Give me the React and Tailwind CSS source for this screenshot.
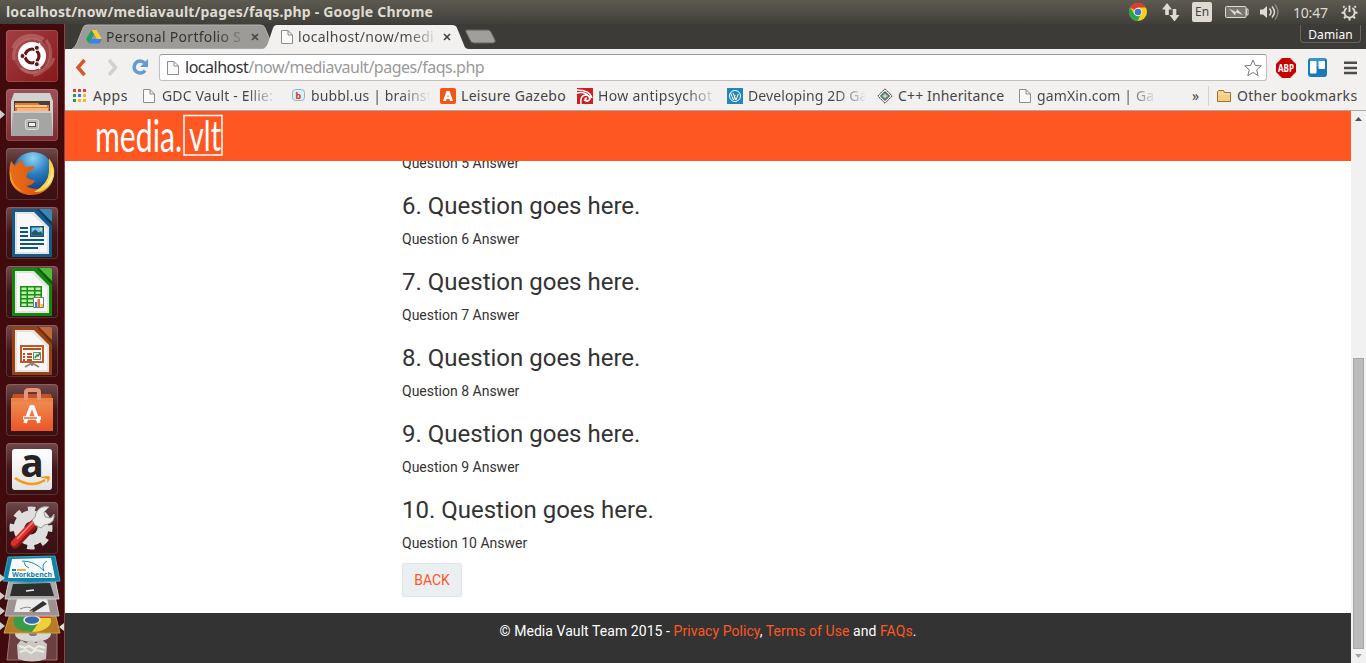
import React from "react";

const ubuntu = "font-['Noto_Sans','Open_Sans',sans-serif]";

function PageIcon() {
  return (
    <svg width="12" height="14" viewBox="0 0 12 14" className="shrink-0">
      <path d="M.5.5h6.5l4.500 4.500v8.500h-11z M7 .5v4.500h4.500" fill="#fafafa" stroke="#8c8c8c" />
    </svg>
  );
}

function ChromeIcon({ size = 18 }) {
  return (
    <svg width={size} height={size} viewBox="0 0 18 18">
      <circle cx="9" cy="9" r="9" fill="#f8cd18" />
      <path d="M9 9 1.200 4.500A9 9 0 0 1 16.800 4.500H9z" fill="#df3b2c" />
      <path d="M1.200 4.500A9 9 0 0 0 8.600 18L12 11 9 9 5.200 11z" fill="#2ba24c" />
      <circle cx="9" cy="9" r="4.300" fill="#f5f5f5" />
      <circle cx="9" cy="9" r="3.300" fill="#3b78c4" />
    </svg>
  );
}

/* ---------- top panel ---------- */
function TopPanel() {
  return (
    <header className={`flex h-6 w-full items-center bg-linear-to-b from-[#5d5b50] to-[#403f3a] pl-1.5 text-[#dfdbd2] ${ubuntu}`}>
      <div className="w-[1123px] text-[14px] leading-6 font-bold tracking-[0.190px] whitespace-nowrap">
        localhost/now/mediavault/pages/faqs.php - Google Chrome
      </div>
      <div className="flex h-6 items-center">
        <div className="w-[33px]"><ChromeIcon /></div>
        <svg width="30" height="18" viewBox="0 0 30 18" fill="#dfdbd2">
          <path d="M5 0 0 6.500h3.200V12h3.600V6.500H10zM12.500 18.500 7.500 12h3.200V6h3.600v6h3.200z" />
        </svg>
        <div className="mr-3 flex h-5 w-5 items-center justify-center rounded-[2px] bg-[#dfdbd2] text-[12px] text-[#45443f]">En</div>
        <svg width="36" height="14" viewBox="0 0 36 14">
          <rect x="1.500" y="1.500" width="20.500" height="11" rx="1" fill="#77756d" stroke="#dfdbd2" />
          <path d="M22.500 4h1.500v6h-1.500z" fill="none" stroke="#dfdbd2" />
          <path d="M5 3.500 12 7l1-3 6 6-7-2.500-1 3z" fill="#dfdbd2" />
        </svg>
        <svg width="33" height="18" viewBox="0 0 33 18">
          <path d="M0 6.500h3l4-3.500v12l-4-3.500H0z" fill="#dfdbd2" />
          <path d="M9.500 5.500q3 3.500 0 7M12 3.500q5 5.500 0 11" fill="none" stroke="#dfdbd2" strokeWidth="1.500" />
          <path d="M15 1.500q6 7.500 0 15" fill="none" stroke="#88867d" strokeWidth="1.500" />
        </svg>
        <div className="w-[48px] text-[14px] tracking-[-0.200px]">10:47</div>
        <svg width="17" height="17" viewBox="0 0 17 17" fill="none" stroke="#dfdbd2">
          <path d="M5.700 4A5.200 5.200 0 1 0 11.300 4M8.500 1.500V8" strokeWidth="1.900" />
          <path d="M3.500 3.500 2.200 2.200M13.500 3.500l1.300-1.300M3 8.800H.5M14 8.800h2.500M4.500 12.800 3 14.300M12.500 12.800l1.500 1.500M8.500 14v2.500" strokeWidth="2" />
        </svg>
      </div>
    </header>
  );
}

/* ---------- launcher ---------- */
const tile = "flex h-[52px] w-[52px] shrink-0 items-center justify-center overflow-hidden rounded-[4px] shadow-[inset_0_0_0_1px_#ffffff25]";
const darkTile = `${tile} bg-linear-to-b from-[#70494b] via-[#431719] to-[#391012]`;

function DocIcon({ color, light, dark, children }) {
  return (
    <svg width="52" height="52" viewBox="0 0 52 52">
      <path d="M6 2H32L46 16V50H6z" fill={color} />
      <path d="M31 2H36L46 12V19z" fill={dark} />
      <path d="M33 2H44q2 0 2 2V15z" fill={light} />
      <path d="M9 5H28L43 20V47H9z" fill="#e3e3e3" />
      <path d="M11 7H26L41 22V45H11z" fill="#f8f8f8" />
      {children}
    </svg>
  );
}

function Launcher() {
  return (
    <aside className="relative flex h-[639px] w-[65px] shrink-0 flex-col gap-[7px] overflow-hidden border-r border-[#8e4444] bg-[#410a0c] pt-1.5 pl-1.5">
      <div className={`${tile} bg-linear-to-br from-[#a33e42] to-[#861719]`}>
        <svg width="52" height="52" viewBox="0 0 52 52">
          <g fill="none" stroke="#e0abac" opacity=".32" strokeWidth="3">
            <path d="M8 30C4 15 22 1 36 11M40 10C51 25 41 44 27 45M15 38C24 47 43 43 48 28M7 18C12 5 26 2 38 9" />
          </g>
          <circle cx="26" cy="26" r="18" fill="#e5b4b4" opacity=".18" />
          <circle cx="26" cy="26" r="14" fill="#fff" />
          <circle cx="26" cy="26" r="7" fill="none" stroke="#65171b" strokeWidth="3.200" />
          <path d="M26 26 12 26M26 26l8-13M26 26l8 13" stroke="#fff" strokeWidth="1.500" />
          <g fill="#65171b" stroke="#fff">
            <circle cx="16.500" cy="26" r="2.500" /><circle cx="30.800" cy="17.800" r="2.500" /><circle cx="30.800" cy="34.200" r="2.500" />
          </g>
        </svg>
      </div>
      <div className={`${tile} bg-linear-to-b from-[#9e5158] to-[#7d2b31]`}>
        <svg width="52" height="52" viewBox="0 0 52 52">
          <path d="M8 4H44L47 12V47H5V12z" fill="#d1d1cf" />
          <path d="M8 12H44V24H8z" fill="#4a403a" />
          <path d="M9 14H32L34 16H43V24H9z" fill="#f07824" /><path d="M9 16h32v2H9z" fill="#f7cd9f" />
          <path d="M11 19H42V24H11z" fill="#ffb476" />
          <path d="M7 22H45L47 47H5z" fill="#a5a5a3" /><path d="M7 22H45V24H7z" fill="#ccc" />
          <rect x="19.500" y="30.500" width="13" height="10" rx="2" fill="#b8b8b7" stroke="#dedede" />
          <rect x="22.500" y="33.500" width="7" height="4" fill="#f4f4f4" stroke="#555" />
        </svg>
      </div>
      <div className={darkTile}>
        <svg width="52" height="52" viewBox="0 0 52 52">
          <defs>
            <radialGradient id="globe" cx=".5" cy=".15" r=".8"><stop stopColor="#8fd6f3" /><stop offset=".5" stopColor="#2b7fc0" /><stop offset="1" stopColor="#123f80" /></radialGradient>
            <linearGradient id="fox" x1="0" x2="1"><stop stopColor="#e8701a" /><stop offset=".6" stopColor="#e2560e" /><stop offset="1" stopColor="#f7b52c" /></linearGradient>
          </defs>
          <circle cx="27" cy="24" r="20" fill="url(#globe)" />
          <path d="M43 10Q52 22 46 34C39 50 14 52 6 36Q1 26 5 13l4 5q3-5 8-6-1 5 3 7l8-1q0 4-6 6l-2 5q5 4 9 3-1 5-9 6 12 7 20-2Q46 26 43 10z" fill="url(#fox)" />
          <path d="M43 11Q52 23 45 35 38 45 28 44q14-8 15-20z" fill="#f9d04c" />
          <path d="M46 19q3 9-3 17l-5 4q8-9 8-21z" fill="#fff0a0" />
          <path d="M5 24q0 13 12 20Q3 39 4 26z" fill="#fa9a2a" />
        </svg>
      </div>
      <div className={darkTile}>
        <DocIcon color="#125b8a" light="#3b86b5" dark="#0c3a5a">
          <g fill="#105580"><path d="M14 20h8v2h-8zM14 24h8v2h-8zM14 28h8v2h-8zM14 32h24v2H14zM14 36h24v2H14zM14 40h18v2H14z" /><path d="M24 19h14v11H24z" /></g>
          <path d="M25.500 20.500h11v8h-11z" fill="#75c6f1" /><path d="M25.500 28.500v-3l4-3 3 3 2-1 2 2v2z" fill="#24586a" /><circle cx="35" cy="22" r="1.500" fill="#f3d95c" />
        </DocIcon>
      </div>
      <div className={darkTile}>
        <DocIcon color="#14870d" light="#4fbd37" dark="#0b5a08">
          <path d="M14 20H36V41H14z" fill="#188f13" />
          <g fill="#bcf0ad"><path d="M15.500 21.500h5v2.500h-5zM22 21.500h6v2.500h-6zM29.500 21.500h5v2.500h-5zM15.500 25.500h5v2.500h-5zM22 25.500h6v2.500h-6zM29.500 25.500h5v2.500h-5zM15.500 29.500h5v2.500h-5zM22 29.500h6v2.500h-6zM29.500 29.500h5v2.500h-5zM15.500 33.500h5V36h-5zM22 33.500h6V36h-6zM15.500 37.500h5V40h-5zM22 37.500h6V40h-6z" /></g>
          <path d="M27.500 31.500h10v10h-10z" fill="#fff" stroke="#777" /><path d="M29 36h2v5h-2z" fill="#168ad3" /><path d="M31.500 33h2.500v8h-2.500z" fill="#ef682d" /><path d="M34.500 38H37v3h-2.500z" fill="#ffc51b" />
        </DocIcon>
      </div>
      <div className={darkTile}>
        <DocIcon color="#97420f" light="#c26a36" dark="#6b2c0b">
          <path d="M15 21H37V37H15z" fill="#fff7f1" stroke="#c45724" strokeWidth="2" /><path d="M17 23h18v2H17zM17 28h2v2h-2zM17 31h2v2h-2zM17 34h2v2h-2zM21 28h5v2h-5zM21 31h5v2h-5zM21 34h5v2h-5z" fill="#b55124" />
          <path d="M27.500 27.500h7v7h-7z" fill="#e7f7ed" stroke="#77817b" /><path d="m29 33 2-3 1 1 2-3" stroke="#23953c" strokeWidth="1.500" fill="none" />
          <path d="m26 38-7 4M26 38l7 4M26 38v3" stroke="#888" strokeWidth="2" />
        </DocIcon>
      </div>
      <div className={darkTile}>
        <svg width="52" height="52" viewBox="0 0 52 52">
          <defs><linearGradient id="bag" x2="0" y2="1"><stop stopColor="#ef9256" /><stop offset="1" stopColor="#eb5524" /></linearGradient></defs>
          <path d="M5 14H47V47H5z" fill="url(#bag)" /><path d="M7 10H45L47 18H5z" fill="#bf5426" /><path d="M5 14H47V18H5z" fill="#ef8146" />
          <path d="M20 16V8q0-2 3-2h7q3 0 3 2v8" fill="none" stroke="#e69676" strokeWidth="4" />
          <path d="m19 39 6-16h2l6 16M17 34h18" fill="none" stroke="#fff" strokeWidth="3.500" /><path d="M18 34h13" stroke="#ed6530" strokeWidth="1.500" />
        </svg>
      </div>
      <div className={darkTile}>
        <svg width="52" height="52" viewBox="0 0 52 52">
          <defs><linearGradient id="card" x2="0" y2="1"><stop stopColor="#fff" /><stop offset="1" stopColor="#e2e2e2" /></linearGradient></defs>
          <rect x="6" y="6" width="40" height="41" rx="3" fill="url(#card)" />
          <text x="26" y="34" textAnchor="middle" fontFamily="Open Sans" fontWeight="bold" fontSize="39" fill="#242424">a</text>
          <path d="M9 35q16 11 30 2" fill="none" stroke="#f59b16" strokeWidth="2.500" />
          <path d="M35 34q8-2 9 0 0 3-3 6 1-4 0-4-2-1-6-1z" fill="#f59b16" />
        </svg>
      </div>
      <div className={`${darkTile} relative z-10`}>
        <svg width="52" height="52" viewBox="0 0 52 52">
          <circle cx="25" cy="26" r="18.500" fill="none" stroke="#dcdcdc" strokeWidth="6" strokeDasharray="7.265 7.265" strokeDashoffset="3.630" />
          <circle cx="25" cy="26" r="12" fill="none" stroke="#dedede" strokeWidth="11" />
          <path d="m9 42 20-21" stroke="#941619" strokeWidth="9" strokeLinecap="round" /><path d="m8 41 21-22" stroke="#d8302e" strokeWidth="6" strokeLinecap="round" /><path d="m11 37 16-17" stroke="#f58978" strokeWidth="1.500" />
          <path d="m29 23-3-5q4-2 4-7 4-8 13-6l-5 5 1 5 6 1 3-4q1 8-6 10-4 0-7 4z" fill="#e9ece9" stroke="#969e99" />
        </svg>
      </div>
      <svg className="absolute top-[527px] left-0" width="64" height="112" viewBox="0 0 64 112">
        <path d="m10 82 5-19h36l6 19v27H7z" fill="#77494b" stroke="#a7898a" opacity=".85" />
        <ellipse cx="33" cy="83" rx="18" ry="8" fill="#d7d7d5" /><ellipse cx="33" cy="83" rx="4" ry="2" fill="#877" />
        <path d="m17 94 4-5 5 3 5-3 5 3 5-4 6 5-1 15q-14 5-28 0z" fill="#c9c8c2" /><path d="m19 95 6 2 4-2 5 3 5-3 6 2M20 101l6-2 5 3 5-3 8 2" fill="none" stroke="#ededdf" strokeWidth="2" />
        <path d="m10 63 45-1 5 20H4z" fill="#b47d25" stroke="#d29f44" />
        <ellipse cx="32" cy="70" rx="19" ry="11" fill="#efd137" /><path d="M13 69q3-11 19-11 15 0 19 9H34z" fill="#d84430" /><path d="M13 69q0 12 19 12l7-10-14-4-4-5q-7 2-8 7z" fill="#3b9b48" /><ellipse cx="32" cy="69" rx="8" ry="4.500" fill="#356ca8" stroke="#eee" strokeWidth="1.500" />
        <path d="m9 46 46-1 4 20H5z" fill="#9c9291" stroke="#beb7b6" /><path d="m17 48 30-1 3 14H14z" fill="#eeeceb" /><path d="M20 58q7-3 11-1" fill="none" stroke="#888" /><path d="m29 60 14-10 4 3-13 8z" fill="#323232" /><path d="m29 60 4-1-1 2z" fill="#dba72f" />
        <path d="m9 29 46-1 4 20H5z" fill="#aaa9a9" stroke="#d0cfcf" /><path d="m13 33 37-1 4 13H10z" fill="#2e2e2e" /><path d="m26 40 8-1" stroke="#eee" strokeWidth="1.500" />
        <path d="m8 6 47-1 5 25q-28 3-57 0z" fill="#1482a8" stroke="#35a4c5" /><path d="m12 8 39-1 4 20H8z" fill="#f7fcff" />
        <path d="M22 10q13 0 22 10-3-7 3-10M24 11q1 5 5 6" fill="none" stroke="#2788ae" />
        <text x="12" y="26" fontFamily="Noto Sans" fontSize="7" fontWeight="bold" fill="#197eaa" textLength="40" lengthAdjust="spacingAndGlyphs">Workbench</text>
        <path d="M12 19h4" stroke="#197eaa" strokeWidth="2" /><path d="M17 19h9" stroke="#edaf2c" strokeWidth="2" />
        <path d="m0 24 5 4-5 4zm0 18 5 4-5 4zm0 15 5 4-5 4zm0 15 5 4-5 4z" transform="translate(0 -1)" fill="#ccc" /><path d="m64 72-5 4 5 4z" fill="#ddd" />
      </svg>
      <svg className="absolute top-[85px] left-0" width="5" height="10"><path d="m0 1 5 4.500L0 10z" fill="#ccc" /></svg>
    </aside>
  );
}

/* ---------- browser chrome ---------- */
function Tabs() {
  return (
    <div className={`relative flex h-[25px] items-start overflow-hidden bg-[#3c3b37] text-[14px] text-[#393939] ${ubuntu}`}>
      <svg className="absolute top-0 left-0" width="440" height="25" viewBox="0 0 440 25">
        <path d="M7 25q3-1 5-6L18 4q1-3 4-3H195q4 0 5 3l7 17q1 4 4 4z" fill="#9c9b98" stroke="#b5b4b0" />
        <path d="M198 25q3-1 5-6l5-15q1-3 4-3H387q4 0 5 3l7 17q1 4 5 4z" fill="#f2f1f0" />
        <path d="M402 6H423q2 0 3 2l4 8q1 3-2 3H409q-3 0-4-3l-4-8q-1-2 1-2z" fill="#a09f9c" stroke="#65645f" />
      </svg>
      <div className="relative flex h-[25px] w-[215px] items-center pl-[21px]">
        <svg width="16" height="14" viewBox="0 0 16 14" className="mr-1 shrink-0"><path d="M5.500 0h5L16 9h-5z" fill="#ffcb2f" /><path d="M5.500 0 8 4.500 3 13.500 0 9z" fill="#1da261" /><path d="M5.500 9H16l-2.500 4.500H3z" fill="#3c82ef" /></svg>
        <span className="w-[138px] overflow-hidden bg-linear-to-r from-[#33322f] from-80% to-[#8f8e8b] bg-clip-text tracking-[0.300px] whitespace-nowrap text-transparent">Personal Portfolio S</span>
        <svg width="8" height="8" className="ml-[7px] shrink-0"><path d="m1 1 6 6M7 1 1 7" stroke="#474747" strokeWidth="1.700" /></svg>
      </div>
      <div className="relative flex h-[25px] w-[200px] items-center pl-[1px]">
        <PageIcon />
        <span className="ml-[5px] w-[137px] overflow-hidden bg-linear-to-r from-[#444] from-80% to-[#ddd] bg-clip-text tracking-[0.300px] whitespace-nowrap text-transparent">localhost/now/medi</span>
        <svg width="8" height="8" className="ml-[8px] shrink-0"><path d="m1 1 6 6M7 1 1 7" stroke="#444" strokeWidth="1.700" /></svg>
      </div>
      <div className="ml-auto mt-[1px] mr-[5px] h-[18px] w-[61px] rounded-b-[4px] border border-t-0 border-[#66645f] text-center text-[12px] leading-5 tracking-[0.100px] text-white">Damian</div>
    </div>
  );
}

function Toolbar() {
  return (
    <div className={`flex h-8 items-center bg-[#f2f1f0] ${ubuntu}`}>
      <svg width="94" height="32" viewBox="0 0 94 32">
        <path d="m19.500 11-6.500 7.500 6.500 7.500" fill="none" stroke="#d5592a" strokeWidth="3.500" />
        <path d="m44 11 6.500 7.500L44 26" fill="none" stroke="#d3d1cf" strokeWidth="3.500" />
        <path d="M79.500 14A6 6 0 1 0 80 21.500" fill="none" stroke="#649bd3" strokeWidth="3.500" /><path d="M83 10v8h-8z" fill="#649bd3" />
      </svg>
      <div className="mt-[5px] flex h-[27px] w-[1108px] shrink-0 items-center rounded-[3px] border border-[#c1c0bf] border-t-[#999] bg-white pl-[7px]">
        <PageIcon />
        <span className="-mt-0.5 ml-[6px] text-[16px] tracking-[-0.490px] text-[#999]"><span className="text-[#333]">localhost</span>/now/mediavault/pages/faqs.php</span>
        <svg className="ml-auto mr-[4px]" width="18" height="18" viewBox="0 0 18 18"><path d="m9 1 2.300 5.400 6 .5-4.600 3.900 1.500 5.900L9 13.500l-5.200 3.200 1.500-5.900L.7 6.900l6-.5z" fill="#fff" stroke="#777" /></svg>
      </div>
      <div className="mt-[5px] flex items-center pl-[9px]">
        <svg width="20" height="20" viewBox="0 0 20 20"><path d="M6 0h8l6 6v8l-6 6H6l-6-6V6z" fill="#c80000" /><text x="2" y="13.500" fontFamily="Open Sans" fontWeight="bold" fontSize="10" fill="#fff" textLength="16" lengthAdjust="spacingAndGlyphs">ABP</text></svg>
        <svg className="ml-3" width="19" height="19" viewBox="0 0 19 19"><rect width="19" height="19" rx="3" fill="#1b7bb9" /><path d="M2 0h15v8H2z" fill="#3096d2" /><rect x="2" y="3" width="6.500" height="12.500" rx="1" fill="#fff" /><rect x="10.500" y="3" width="6.500" height="8" rx="1" fill="#fff" /></svg>
        <svg className="ml-4" width="15" height="14"><path d="M1 1.800h13M1 6.900h13M1 12h13" stroke="#4c4c4c" strokeWidth="2.500" /></svg>
      </div>
    </div>
  );
}

function Bookmarks() {
  const fade = "overflow-hidden bg-linear-to-r from-[#454545] from-75% to-[#e4e4e4] bg-clip-text text-transparent";
  return (
    <div className={`flex h-[30px] items-center border-b border-[#a9a8a7] bg-[#f2f1f0] pl-2 text-[14px] tracking-[0.300px] whitespace-nowrap text-[#454545] ${ubuntu}`}>
      <svg width="13" height="13" viewBox="0 0 13 13"><path d="M0 0h3v3H0zM5 0h3v3H5zM10 0h3v3h-3z" fill="#e24034" /><path d="M0 5h3v3H0zM0 10h3v3H0z" fill="#309850" /><path d="M5 5h3v3H5z" fill="#347de0" /><path d="M10 5h3v3h-3zM5 10h3v3H5zM10 10h3v3h-3z" fill="#f5b62b" /></svg>
      <span className="ml-[7px] w-[50px] tracking-[0.500px]">Apps</span>
      <PageIcon />
      <span className={`ml-[7px] mr-[17px] w-[113px] tracking-[0.150px] ${fade}`}>GDC Vault - Ellie:</span>
      <svg className="mr-[6px]" width="13" height="13" viewBox="0 0 13 13"><rect x=".5" y=".5" width="12" height="11" rx="3" fill="#dbf0f6" stroke="#91b4c6" /><text x="3.500" y="9.500" fontFamily="Noto Sans" fontWeight="bold" fontSize="9" fill="#cd3431">b</text></svg>
      <span className={`mr-[11px] w-[118px] ${fade} tracking-[0.150px]`}>bubbl.us | brainst</span>
      <svg className="mr-[5px]" width="16" height="16" viewBox="0 0 16 16"><rect width="16" height="16" rx="2" fill="#f45516" /><path d="M3 13 6.500 3h3L13 13h-3l-.7-2H6.700L6 13zm4.400-4h1.200L8 6.500z" fill="#fff" /></svg>
      <span className="mr-3 w-[104px]">Leisure Gazebo</span>
      <svg className="mr-[5px]" width="16" height="16" viewBox="0 0 16 16"><path d="M0 0h16v16H0z" fill="#c92027" /><path d="M0 2q13 0 15 8M0 5q10-2 13 6-2 4-6 1M4 16Q3 8 8 7q5 0 5 3-1 4-4 2-2-2 1-2" fill="none" stroke="#fff" strokeWidth="1.500" /></svg>
      <span className={`mr-[13px] w-[116px] ${fade}`}>How antipsychot</span>
      <svg className="mr-[5px]" width="16" height="16" viewBox="0 0 16 16"><path d="M0 0h16v16H0z" fill="#2386b7" /><circle cx="8" cy="8" r="5.500" fill="none" stroke="#fff" /><path d="m3.500 5 3 7 1.700-5m-2.200-2 3 7 2.300-6" fill="none" stroke="#fff" /></svg>
      <span className={`mr-3 w-[117px] tracking-[0.100px] ${fade}`}>Developing 2D Ga</span>
      <svg className="mr-[5px]" width="16" height="16" viewBox="0 0 16 16"><path d="m8 .8 7.200 7.200L8 15.200.8 8z" fill="#fff" stroke="#333" strokeDasharray="2 .5" /><path d="m8 3.500 4.500 4.500L8 12.500 3.500 8z" fill="#679475" stroke="#364b3e" /><path d="M5.500 8h5M8 6v4" stroke="#eee" /></svg>
      <span className="mr-[15px] w-[106px] tracking-[0.150px]">C++ Inheritance</span>
      <PageIcon />
      <span className={`ml-[6px] w-[118px] tracking-[0.150px] ${fade}`}>gamXin.com | Gar</span>
      <span className="ml-[37px] w-[9px] text-[14px]">»</span>
      <div className="mx-[7px] h-5 border-l border-[#cbd3dc]" />
      <svg width="16" height="14" viewBox="0 0 16 14"><path d="M1.500 12.500V2.500l1-1h5l1 2h6v9z" fill="#f8ce80" stroke="#9d703a" /><path d="M2 5h12" stroke="#ffe6b1" /></svg>
      <span className="ml-[5px]">Other bookmarks</span>
    </div>
  );
}

/* ---------- page ---------- */
function Faqs() {
  return (
    <div className="flex h-[552px] font-['Roboto',sans-serif] text-[14px] leading-5 text-[#333]">
      <div className="flex min-w-0 flex-1 flex-col bg-white">
        <div className="h-[50px] shrink-0 bg-[#ff5722] pl-[30px]">
          <svg width="130" height="50" viewBox="0 0 130 50">
            <text x="0" y="41" fontFamily="Lato" fontWeight="400" fontSize="44" fill="#fff" textLength="87" lengthAdjust="spacingAndGlyphs">media.</text>
            <rect x="89" y="4.500" width="38" height="39.500" fill="none" stroke="#fff" strokeWidth="1.500" />
            <text x="94" y="40" fontFamily="Lato" fontSize="42" fill="#fff" textLength="32" lengthAdjust="spacingAndGlyphs">vlt</text>
          </svg>
        </div>
        <main className="h-[452px] shrink-0 overflow-hidden pl-[337px]">
          <p className="-mt-2">Question 5 Answer</p>
          {[6, 7, 8, 9, 10].map((n) => (
            <section key={n} className="pt-5">
              <h3 className="mb-2.5 text-[24px] leading-[26px]">{n}. Question goes here.</h3>
              <p>Question {n} Answer</p>
            </section>
          ))}
          <button className="mt-2.5 h-[34px] w-[60px] rounded-[2px] border border-[#e2e5e8] bg-[#eceff1] text-[#ff5722]">BACK</button>
        </main>
        <footer className="h-[50px] shrink-0 bg-[#333] pt-2 text-center tracking-[0.060px] text-white">
          © Media Vault Team 2015 - <span className="text-[#ff5722]">Privacy Policy</span>, <span className="text-[#ff5722]">Terms of Use</span> and <span className="text-[#ff5722]">FAQs</span>.
        </footer>
      </div>
      <div className="flex w-[15px] flex-col items-center bg-[#f1f1f1]">
        <svg width="15" height="15"><path d="M4 10h7L7.500 6z" fill="#505050" /></svg>
        <div className="mt-[232px] h-[291px] w-[11px] border border-[#a8a8a8] bg-[#bcbcbc]" />
        <svg width="15" height="14"><path d="M4 5h7L7.500 9z" fill="#a3a3a3" /></svg>
      </div>
    </div>
  );
}

export default function App() {
  return (
    <div className="h-[663px] w-[1366px] overflow-hidden">
      <TopPanel />
      <div className="flex">
        <Launcher />
        <div className="w-[1301px]">
          <Tabs />
          <Toolbar />
          <Bookmarks />
          <Faqs />
        </div>
      </div>
    </div>
  );
}
